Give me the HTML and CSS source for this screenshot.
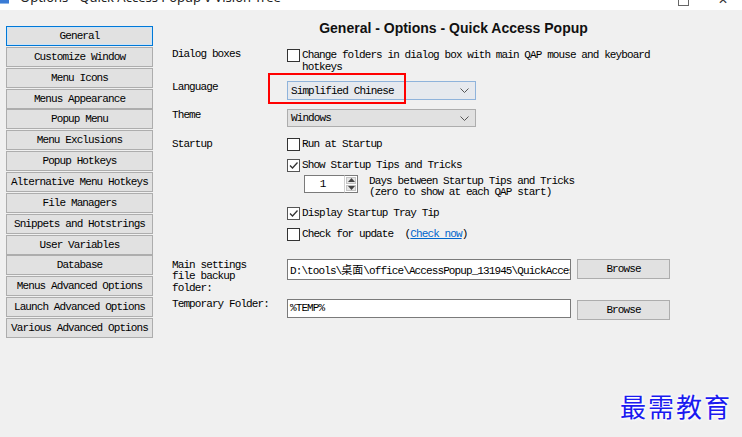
FILE: index.html
```
<!DOCTYPE html>
<html>
<head>
<meta charset="utf-8">
<link rel="stylesheet" href="styles.css">
</head>
<body>
<div class="titlebar">
  <span class="appicon"></span>
  <span class="title">Options - Quick Access Popup v Vision Tree</span>
  <span class="spacer"></span>
  <span class="winctl max"></span>
  <span class="winctl close">✕</span>
</div>
<div class="main">
  <nav class="nav">
    <div class="navbtn active">General</div>
    <div class="navbtn">Customize Window</div>
    <div class="navbtn">Menu Icons</div>
    <div class="navbtn">Menus Appearance</div>
    <div class="navbtn">Popup Menu</div>
    <div class="navbtn">Menu Exclusions</div>
    <div class="navbtn">Popup Hotkeys</div>
    <div class="navbtn">Alternative Menu Hotkeys</div>
    <div class="navbtn">File Managers</div>
    <div class="navbtn">Snippets and Hotstrings</div>
    <div class="navbtn">User Variables</div>
    <div class="navbtn">Database</div>
    <div class="navbtn">Menus Advanced Options</div>
    <div class="navbtn">Launch Advanced Options</div>
    <div class="navbtn">Various Advanced Options</div>
  </nav>
  <section class="panel">
    <h1 class="heading">General - Options - Quick Access Popup</h1>

    <div class="row r-dialog">
      <div class="lbl">Dialog boxes</div>
      <div class="ctl">
        <div class="chk"><span class="box"></span><span class="txt t12">Change folders in dialog box with main QAP mouse and keyboard<br>hotkeys</span></div>
      </div>
    </div>

    <div class="row r-lang">
      <div class="lbl">Language</div>
      <div class="ctl rel">
        <div class="sel focus"><span class="seltxt">Simplified Chinese</span><svg class="chev" width="9" height="5" viewBox="0 0 9 5"><path d="M0.5 0.5 L4.5 4.5 L8.5 0.5" fill="none" stroke="#555" stroke-width="1"/></svg></div>
        <div class="redbox"></div>
      </div>
    </div>

    <div class="row r-theme">
      <div class="lbl">Theme</div>
      <div class="ctl">
        <div class="sel"><span class="seltxt">Windows</span><svg class="chev" width="9" height="5" viewBox="0 0 9 5"><path d="M0.5 0.5 L4.5 4.5 L8.5 0.5" fill="none" stroke="#555" stroke-width="1"/></svg></div>
      </div>
    </div>

    <div class="row r-startup">
      <div class="lbl">Startup</div>
      <div class="ctl col">
        <div class="chk"><span class="box"></span><span class="txt">Run at Startup</span></div>
        <div class="chk m-tips"><span class="box on"><svg width="11" height="11" viewBox="0 0 11 11"><path d="M2 5.5 L4.5 8 L9.5 2.5" fill="none" stroke="#333" stroke-width="1.3"/></svg></span><span class="txt">Show Startup Tips and Tricks</span></div>
        <div class="spin">
          <div class="spinedit">1</div>
          <div class="updown">
            <div class="ud"><svg width="7" height="4" viewBox="0 0 7 4"><path d="M0 4 L3.5 0 L7 4 Z" fill="#444"/></svg></div>
            <div class="ud"><svg width="7" height="4" viewBox="0 0 7 4"><path d="M0 0 L3.5 4 L7 0 Z" fill="#444"/></svg></div>
          </div>
          <div class="spintext">Days between Startup Tips and Tricks<br>(zero to show at each QAP start)</div>
        </div>
        <div class="chk m-tray"><span class="box on"><svg width="11" height="11" viewBox="0 0 11 11"><path d="M2 5.5 L4.5 8 L9.5 2.5" fill="none" stroke="#333" stroke-width="1.3"/></svg></span><span class="txt">Display Startup Tray Tip</span></div>
        <div class="chk m-upd"><span class="box"></span><span class="txt pre">Check for update  (<span class="link">Check now</span>)</span></div>
      </div>
    </div>

    <div class="row r-main">
      <div class="lbl l115">Main settings<br>file backup<br>folder:</div>
      <div class="ctl flexrow">
        <div class="edit tall"><span class="pathtxt">D:\tools\<span class="cjk">桌面</span>\office\AccessPopup_131945\QuickAccessPopup</span></div>
        <div class="browse">Browse</div>
      </div>
    </div>

    <div class="row r-temp">
      <div class="lbl">Temporary Folder:</div>
      <div class="ctl flexrow">
        <div class="edit"><span class="pathtxt">%TEMP%</span></div>
        <div class="browse b-temp">Browse</div>
      </div>
    </div>
  </section>
</div>
<div class="watermark">最需教育</div>
</body>
</html>
```
FILE: styles.css
```
html, body {
  margin: 0;
  padding: 0;
}
body {
  width: 742px;
  height: 437px;
  overflow: hidden;
  position: relative;
  background: #f0f0f0;
  color: #000;
  font-family: "Liberation Mono", monospace;
  font-size: 11px;
  letter-spacing: -0.9px;
}
.titlebar {
  height: 10px;
  background: #fff;
  display: flex;
  align-items: flex-start;
  overflow: hidden;
}
.appicon {
  width: 9px;
  height: 4px;
  margin-top: -1px;
  background: #3a7bd5;
  border-bottom: 1px solid #8fb7e8;
}
.title {
  margin-left: 11px;
  margin-top: -11px;
  font-family: "Noto Sans", sans-serif;
  font-size: 13px;
  line-height: 16px;
  letter-spacing: 0;
  color: #222;
}
.spacer { flex: 1; }
.winctl {
  font-family: "DejaVu Sans", sans-serif;
  letter-spacing: 0;
  color: #333;
}
.max {
  width: 9px;
  height: 9px;
  margin-top: -5px;
  border: 1px solid #666;
  margin-right: 29px;
}
.close {
  font-size: 12px;
  line-height: 12px;
  margin-top: -6px;
  margin-right: 14px;
}
.main {
  display: flex;
}
.nav {
  flex: none;
  width: 147px;
  padding: 16px 0 0 6px;
  display: flex;
  flex-direction: column;
  gap: 0.86px;
}
.navbtn {
  height: 20px;
  box-sizing: border-box;
  border: 1px solid #adadad;
  background: #e1e1e1;
  text-align: center;
  line-height: 18px;
  white-space: nowrap;
}
.navbtn.active {
  border-color: #0078d7;
  box-shadow: inset 0 0 0 1px #cce4f7;
}
.panel {
  flex: 1;
  padding-left: 19px;
  display: flex;
  flex-direction: column;
}
.heading {
  margin: 9px 7px 0 0;
  height: 18px;
  line-height: 18px;
  text-align: center;
  font-family: "Liberation Sans", sans-serif;
  font-weight: bold;
  font-size: 14px;
  letter-spacing: 0;
  color: #111;
}
.row {
  display: flex;
  align-items: flex-start;
}
.lbl {
  width: 115px;
  flex: none;
  line-height: 12px;
  white-space: nowrap;
}
.ctl {
  flex: none;
}
.rel { position: relative; }
.col { display: flex; flex-direction: column; }
.flexrow { display: flex; align-items: flex-start; }

.r-dialog { margin-top: 12px; }
.r-dialog .lbl { margin-top: -1px; }
.r-lang { margin-top: 8px; }
.r-theme { margin-top: 9px; }
.r-startup { margin-top: 11px; }
.r-main { margin-top: 18px; height: 21px; }
.r-temp { margin-top: 19px; }
.r-temp .lbl { margin-top: -1px; }

.chk {
  display: flex;
  align-items: flex-start;
}
.box {
  flex: none;
  width: 13px;
  height: 13px;
  box-sizing: border-box;
  border: 1px solid #333;
  background: #fff;
  margin-right: 2px;
  display: flex;
  align-items: center;
  justify-content: center;
}
.box.on {
  border-color: #555;
}
.txt {
  line-height: 13px;
  white-space: nowrap;
}
.txt.t12 { line-height: 12px; }
.pre { white-space: pre; }
.link {
  color: #0066cc;
  text-decoration: underline;
}
.m-tips { margin-top: 8px; }
.m-tray { margin-top: 14px; }
.m-upd { margin-top: 8px; }

.sel {
  width: 189px;
  height: 19px;
  box-sizing: border-box;
  border: 1px solid #adadad;
  background: #e1e1e1;
  display: flex;
  align-items: center;
  padding: 0 6px 0 3px;
}
.r-theme .sel { height: 18px; }
.sel.focus {
  border-color: #8fb3db;
  background: #e6e9ee;
}
.seltxt { flex: 1; white-space: nowrap; }
.chev { flex: none; }
.redbox {
  position: absolute;
  left: -19px;
  top: -8px;
  width: 138px;
  height: 31px;
  box-sizing: border-box;
  border: 2px solid #ff0000;
}

.spin {
  display: flex;
  align-items: flex-start;
  height: 18px;
  margin-top: 3px;
  margin-left: 17px;
}
.spinedit {
  width: 40px;
  height: 18px;
  box-sizing: border-box;
  border: 1px solid #7a7a7a;
  border-right: none;
  background: #fff;
  text-align: center;
  line-height: 16px;
  padding-right: 4px;
}
.updown {
  width: 14px;
  height: 18px;
  box-sizing: border-box;
  border: 1px solid #7a7a7a;
  border-left: 1px solid #d0d0d0;
  background: #fff;
  display: flex;
  flex-direction: column;
  padding: 1px;
  gap: 1px;
}
.ud {
  flex: 1;
  background: #e6e6e6;
  border: 1px solid #c4c4c4;
  display: flex;
  align-items: center;
  justify-content: center;
}
.spintext {
  margin-left: 11px;
  line-height: 11px;
  margin-top: 1px;
  white-space: nowrap;
}

.edit {
  width: 284px;
  height: 19px;
  box-sizing: border-box;
  border: 1px solid #7a7a7a;
  background: #fff;
  overflow: hidden;
  white-space: nowrap;
  line-height: 17px;
  padding-left: 2px;
}
.edit.tall { height: 21px; line-height: 19px; }
.cjk {
  font-family: "Noto Sans CJK SC", sans-serif;
  letter-spacing: 0;
  font-size: 11px;
}
.l115 { line-height: 11.5px; margin-top: 0.5px; }
.browse {
  width: 93px;
  height: 20px;
  margin-left: 6px;
  box-sizing: border-box;
  border: 1px solid #adadad;
  background: #e1e1e1;
  text-align: center;
  line-height: 18px;
}
.b-temp { margin-top: 1px; }

.watermark {
  position: absolute;
  left: 620px;
  top: 389px;
  font-family: "Noto Sans CJK SC", sans-serif;
  font-size: 26px;
  line-height: 34px;
  letter-spacing: 2px;
  color: #1a1af0;
  text-shadow: 0 0 3px #fff, 0 0 3px #fff, 0 0 4px #fff;
}
```
